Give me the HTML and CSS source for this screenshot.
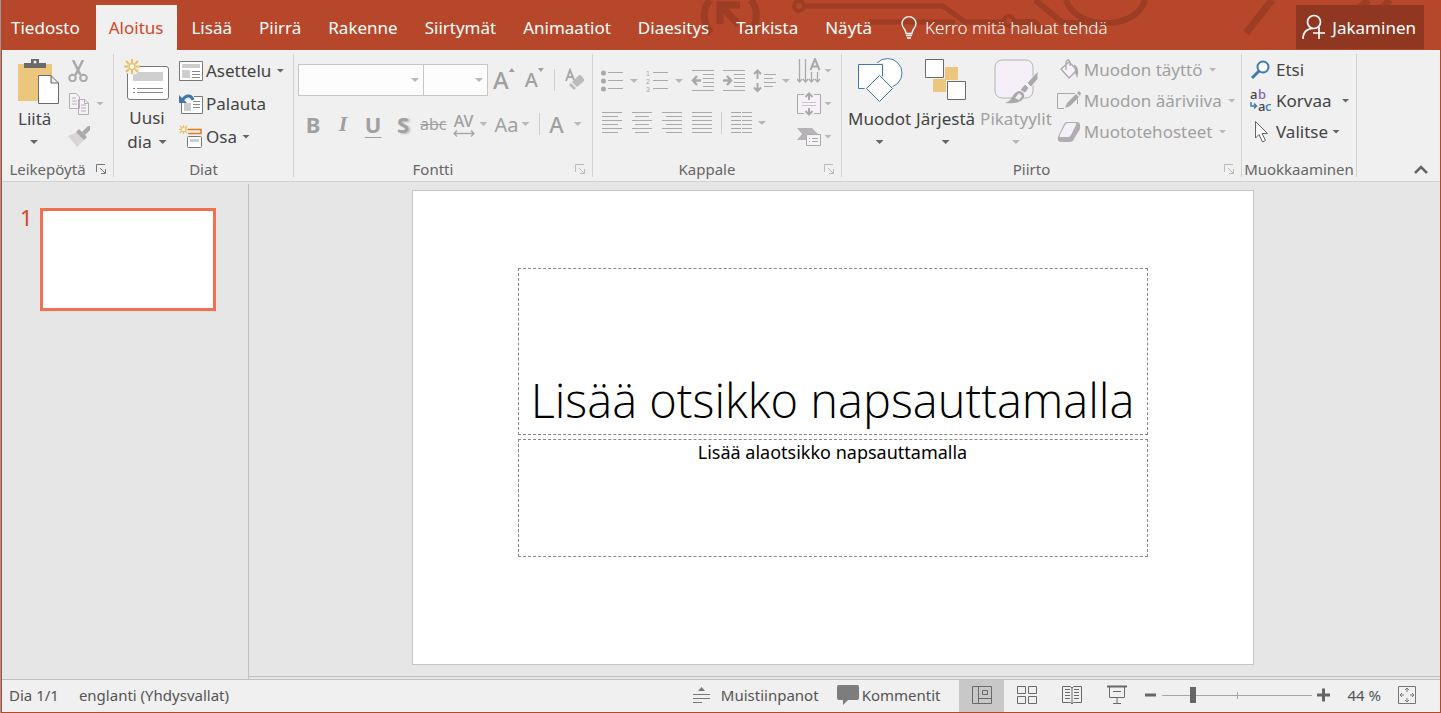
FILE: index.html
```
<!DOCTYPE html>
<html lang="fi">
<head>
<meta charset="utf-8">
<title>Esitys</title>
<link rel="stylesheet" href="styles.css">
</head>
<body>
<div class="window">
  <header class="titlebar">
    <svg class="circuit" width="751" height="50" viewBox="0 0 751 50" fill="none" stroke="#9d3d24" stroke-width="6">
      <path d="M22 33A25 25 0 0 1 21 0M62 0A25 25 0 0 1 60 33" stroke-width="7"/>
      <path d="M31 24V5H51M32 6L50 25" stroke-width="7"/>
      <circle cx="110" cy="6" r="5" stroke-width="4"/>
      <path d="M116 6H254L276 22H315M180 22H266" stroke-width="5"/>
      <circle cx="320" cy="21" r="5" stroke-width="4"/>
      <path d="M325 22H345L356 31M346 0L374 23H408M377 0C386 30 446 32 456 0"/>
      <path d="M583 0L557 33M679 0L671 8M701 0L693 8" stroke-width="7"/>
    </svg>
    <nav class="tabs">
      <button class="tab tab-file">Tiedosto</button>
      <button class="tab tab-active">Aloitus</button>
      <button class="tab">Lisää</button>
      <button class="tab">Piirrä</button>
      <button class="tab">Rakenne</button>
      <button class="tab">Siirtymät</button>
      <button class="tab">Animaatiot</button>
      <button class="tab">Diaesitys</button>
      <button class="tab">Tarkista</button>
      <button class="tab">Näytä</button>
    </nav>
    <button class="tell-me">
      <svg width="16" height="24" viewBox="0 0 16 24" fill="none" stroke="#fff" stroke-width="1.3"><path d="M5 17.500C5 13 1 12 1 7.500A7 6.800 0 0 1 15 7.500C15 12 11 13 11 17.500ZM5 19.500H11M6 22H10"/></svg>
      <span>Kerro mitä haluat tehdä</span>
    </button>
    <button class="share">
      <svg width="24" height="26" viewBox="0 0 24 26" fill="none" stroke="#fff" stroke-width="1.700"><circle cx="12" cy="8" r="6.500"/><path d="M1 25C1 17 6 14.500 11 14.500M11 19H23M17 13V25"/></svg>
      <span>Jakaminen</span>
    </button>
  </header>

  <section class="ribbon">
    <div class="group">
      <div class="group-body clipboard">
        <button class="big paste">
          <svg width="42" height="46" viewBox="0 0 42 46"><path d="M0 6H34V43H0Z" fill="#ecc67d"/><path d="M6 10V5H13V1H21V5H28V10Z" fill="#6a6a6a"/><circle cx="17" cy="4" r="1.500" fill="#f0f0f0"/><path d="M20.500 17.500H33L40.500 25V45.500H20.500ZM33 17.500V25H40.500" fill="#fff" stroke="#6a6a6a"/></svg>
          <span>Liitä</span><i class="caret"></i>
        </button>
        <div class="stack">
          <button class="cmd off" aria-label="Leikkaa"><svg width="22" height="22" viewBox="0 0 22 22" fill="none" stroke="#a9a9a9" stroke-width="2"><circle cx="4.500" cy="18" r="3.300"/><circle cx="15.500" cy="18" r="3.300"/><path d="M5 0L12.500 15M15 0L7.500 15" stroke-width="2.500"/></svg></button>
          <button class="cmd off" aria-label="Kopioi"><svg width="22" height="24" viewBox="0 0 22 24" fill="#f7f2f8" stroke="#b3b0b4"><path d="M1.500 1.500H8L11.500 5V16.500H1.500ZM4 6H8M4 9H9M4 12H9M10.500 7.500H17L20.500 11V22.500H10.500ZM16.500 7.500V11.500H20.500M13 13H18M13 16H18M13 19H18"/></svg><i class="caret"></i></button>
          <button class="cmd off" aria-label="Muotoilusivellin"><svg width="22" height="22" viewBox="0 0 22 22"><path d="M0 10L9 6L17 13L9 21Z" fill="#d8d4d8"/><path d="M8 6L11 3L19 11L16 14Z" fill="#a9a9a9"/><path d="M14 6L20 0H22V4L17 9Z" fill="#a9a9a9"/></svg></button>
        </div>
      </div>
      <footer class="group-label"><span>Leikepöytä</span><svg class="launcher" width="10" height="10" viewBox="0 0 10 10" fill="none" stroke="#777"><path d="M.5 8V.5H9M4 4L9 9M9.500 5V9.500H5"/></svg></footer>
    </div>

    <div class="group">
      <div class="group-body slides">
        <button class="big">
          <svg width="46" height="44" viewBox="0 0 46 44"><rect x="3.500" y="8.500" width="41" height="33" rx="2.500" fill="#fff" stroke="#777"/><path d="M9 14H39V23H9Z" fill="#cfcfcf"/><path d="M9 30.500H11M13 30.500H39M9 34.500H11M13 34.500H39" stroke="#8a8a8a"/><circle cx="8" cy="9" r="8" fill="#f0f0f0"/><path d="M8 1V5M8 12V16M0 8.500H4M12 8.500H16M2 3L5 6M11 11L14 14M14 3L11 6M5 11L2 14" stroke="#ecc067" stroke-width="2"/><circle cx="8" cy="8.500" r="3" fill="#fff" stroke="#ecc067" stroke-width="1.500"/></svg>
          <span>Uusi</span><span class="with-caret">dia<i class="caret"></i></span>
        </button>
        <div class="stack">
          <button class="cmd"><svg width="24" height="20" viewBox="0 0 24 20"><path d="M.5.500H23.500V19.500H.5Z" fill="#fff" stroke="#777"/><path d="M3 3H21V7H3ZM3 9H11V17H3Z" fill="#cdcdcd"/><path d="M13 10.500H21M13 13.500H21M13 16.500H21" stroke="#8a8a8a"/></svg><span>Asettelu</span><i class="caret"></i></button>
          <button class="cmd"><svg width="24" height="20" viewBox="0 0 24 20"><path d="M2.500 2.500H23.500V19.500H2.500Z" fill="#fff" stroke="#777"/><path d="M5 9H12V17H5Z" fill="#cdcdcd"/><path d="M14 7.500H21M14 10.500H21M14 13.500H21" stroke="#8a8a8a"/><path d="M0 0H15V6H0Z" fill="#f0f0f0"/><path d="M14 6C12 0 6 1 3 7" fill="none" stroke="#4177b0" stroke-width="3"/><path d="M0 1V9H8Z" fill="#4177b0"/></svg><span>Palauta</span></button>
          <button class="cmd"><svg width="24" height="24" viewBox="0 0 24 24"><path d="M9 4.500H22V8.500H9" fill="none" stroke="#e17a20" stroke-width="1.500"/><rect x="8.500" y="11.500" width="14" height="11" rx="1" fill="#fff" stroke="#777"/><path d="M11 14H20V17H11Z" fill="#cdcdcd"/><path d="M4.500 0V9M0 4.500H9M1 1L8 8M8 1L1 8" stroke="#ecc067" stroke-width="1.300"/><circle cx="4.500" cy="4.500" r="1.500" fill="#fff"/></svg><span>Osa</span><i class="caret"></i></button>
        </div>
      </div>
      <footer class="group-label"><span>Diat</span></footer>
    </div>

    <div class="group">
      <div class="group-body fonts off">
        <div class="row">
          <select class="combo combo-font" aria-label="Fontti"><option></option></select>
          <select class="combo combo-size" aria-label="Fonttikoko"><option></option></select>
          <button class="cmd glyph grow">A<i class="tri-up"></i></button>
          <button class="cmd glyph shrink">A<i class="caret"></i></button>
          <i class="sep"></i>
          <button class="cmd" aria-label="Poista muotoilut"><svg width="22" height="24" viewBox="0 0 22 24"><path d="M1 13L5 2L9 12M2.500 9H8" fill="none" stroke="#a9a9a9" stroke-width="2"/><path d="M7 14L14 7Q15 6.500 16 7.500L19 11Q19.500 12 19 13L12 19Z" fill="#bdbabd"/><path d="M6 15L11 20L9 22L4 17Z" fill="#bdbabd"/></svg></button>
        </div>
        <div class="row row-format">
          <button class="cmd glyph bold">B</button>
          <button class="cmd glyph italic">I</button>
          <button class="cmd glyph under">U</button>
          <button class="cmd glyph shadow">S</button>
          <button class="cmd strike">abc</button>
          <button class="cmd spacing"><span class="av">AV<svg width="22" height="7" viewBox="0 0 22 7" fill="none" stroke="#a9a9a9" stroke-width="1.500"><path d="M1 3.500H21M4 .5L1 3.500L4 6.500M18 .5L21 3.500L18 6.500"/></svg></span><i class="caret"></i></button>
          <button class="cmd case">Aa<i class="caret"></i></button>
          <i class="sep"></i>
          <button class="cmd glyph color">A<i class="caret"></i></button>
        </div>
      </div>
      <footer class="group-label"><span>Fontti</span><svg class="launcher" width="10" height="10" viewBox="0 0 10 10" fill="none" stroke="#bbb"><path d="M.5 8V.5H9M4 4L9 9M9.500 5V9.500H5"/></svg></footer>
    </div>

    <div class="group">
      <div class="group-body paragraph off">
        <div class="para-rows">
          <div class="row lists">
            <button class="cmd" aria-label="Luettelomerkit"><svg width="23" height="22" viewBox="0 0 23 22"><path d="M0 3a2.500 2.500 0 1 0 5 0a2.500 2.500 0 1 0-5 0M0 11a2.500 2.500 0 1 0 5 0a2.500 2.500 0 1 0-5 0M0 19a2.500 2.500 0 1 0 5 0a2.500 2.500 0 1 0-5 0" fill="#a9a9a9"/><path d="M7 2.500H22M7 10.500H22M7 18.500H22" stroke="#a9a9a9"/></svg><i class="caret"></i></button>
            <button class="cmd" aria-label="Numerointi"><svg class="numbers" width="23" height="24" viewBox="0 0 23 24"><text x="0" y="7">1</text><text x="0" y="15">2</text><text x="0" y="23">3</text><path d="M7 3.500H22M7 11.500H22M7 19.500H22" stroke="#a9a9a9"/></svg><i class="caret"></i></button>
            <button class="cmd" aria-label="Pienennä luettelotasoa"><svg width="23" height="22" viewBox="0 0 23 22" fill="none" stroke="#a9a9a9"><path d="M1 .5H23M12 4.500H23M12 8.500H23M12 12.500H23M12 16.500H23M1 20.500H23"/><path d="M10 10.500H2M6 6L2 10.500L6 15" stroke-width="2.500"/></svg></button>
            <button class="cmd" aria-label="Suurenna luettelotasoa"><svg width="23" height="22" viewBox="0 0 23 22" fill="none" stroke="#a9a9a9"><path d="M1 .5H23M12 4.500H23M12 8.500H23M12 12.500H23M12 16.500H23M1 20.500H23"/><path d="M1 10.500H9M5 6L9 10.500L5 15" stroke-width="2.500"/></svg></button>
            <button class="cmd" aria-label="Riviväli"><svg width="23" height="24" viewBox="0 0 23 24" fill="none" stroke="#a9a9a9"><path d="M11 5.500H23M11 9.500H20M11 13.500H23M11 17.500H20"/><path d="M4.500 2V10M1 5L4.500 1.500L8 5M4.500 14V22M1 18.500L4.500 22L8 18.500" stroke-width="2"/></svg><i class="caret"></i></button>
          </div>
          <div class="row aligns">
            <button class="cmd" aria-label="Tasaa vasemmalle"><svg width="20" height="22" viewBox="0 0 20 22" stroke="#a9a9a9"><path d="M0 .5H20M0 4.500H16M0 8.500H20M0 12.500H16M0 16.500H20M0 20.500H16"/></svg></button>
            <button class="cmd" aria-label="Keskitä"><svg width="20" height="22" viewBox="0 0 20 22" stroke="#a9a9a9"><path d="M0 .5H20M3 4.500H17M0 8.500H20M3 12.500H17M0 16.500H20M3 20.500H17"/></svg></button>
            <button class="cmd" aria-label="Tasaa oikealle"><svg width="20" height="22" viewBox="0 0 20 22" stroke="#a9a9a9"><path d="M0 .5H20M4 4.500H20M0 8.500H20M4 12.500H20M0 16.500H20M4 20.500H20"/></svg></button>
            <button class="cmd" aria-label="Tasaa molemmat reunat"><svg width="20" height="22" viewBox="0 0 20 22" stroke="#a9a9a9"><path d="M0 .5H20M0 4.500H20M0 8.500H20M0 12.500H20M0 16.500H20M0 20.500H20"/></svg></button>
            <i class="sep"></i>
            <button class="cmd" aria-label="Palstat"><svg width="21" height="22" viewBox="0 0 21 22" stroke="#a9a9a9"><path d="M0 .5H10M11 .5H21M0 4.500H10M11 4.500H21M0 8.500H10M11 8.500H21M0 12.500H10M11 12.500H21M0 16.500H10M11 16.500H21M0 20.500H10M11 20.500H21"/></svg><i class="caret"></i></button>
          </div>
        </div>
        <div class="stack">
          <button class="cmd" aria-label="Tekstin suunta"><svg width="24" height="26" viewBox="0 0 24 26" fill="none" stroke="#a9a9a9"><path d="M2.500 1V24M8.500 1V24M14.500 14V24M20.500 14V24M0 21L2.500 24L5 21M6 21L8.500 24L11 21M12 21L14.500 24L17 21M18 21L20.500 24L23 21" stroke-width="1.300"/><path d="M13.500 12L18 1L22.500 12M15 8.500H21" stroke-width="2"/></svg><i class="caret"></i></button>
          <button class="cmd" aria-label="Tasaa teksti"><svg width="24" height="24" viewBox="0 0 24 24" fill="none" stroke="#a9a9a9"><path d="M.5 2.500H23.500V21.500H.5Z" fill="#f7f2f8"/><path d="M5 10.500H19M5 13.500H19" stroke="#c9c5c9"/><path d="M7 2.500H17M7 21.500H17" stroke="#f0f0f0" stroke-width="2"/><path d="M12 1V8M8.500 5L12 1.500L15.500 5M12 16V23M8.500 19L12 22.500L15.500 19" stroke-width="2"/></svg><i class="caret"></i></button>
          <button class="cmd" aria-label="Muunna SmartArtiksi"><svg width="24" height="20" viewBox="0 0 24 20"><path d="M0 1H15L21 7H9V13H0L5 7Z" fill="#b5b3b5"/><path d="M9.500 7.500H23.500V18.500H9.500Z" fill="#f7f2f8" stroke="#a9a9a9"/><path d="M12 11.500H13M15 11.500H21M12 14.500H13M15 14.500H21" stroke="#a9a9a9"/></svg><i class="caret"></i></button>
        </div>
      </div>
      <footer class="group-label"><span>Kappale</span><svg class="launcher" width="10" height="10" viewBox="0 0 10 10" fill="none" stroke="#bbb"><path d="M.5 8V.5H9M4 4L9 9M9.500 5V9.500H5"/></svg></footer>
    </div>

    <div class="group">
      <div class="group-body drawing">
        <button class="big">
          <svg width="46" height="46" viewBox="0 0 46 46" fill="#fff" stroke="#4079b5"><circle cx="30.500" cy="15" r="14.500"/><path d="M1.500 6.500H25.500V30.500H1.500Z" stroke="#f0f0f0" stroke-width="3"/><path d="M1.500 6.500H25.500V30.500H1.500Z"/><path d="M22.500 17.500L35.500 30.500L22.500 43.500L9.500 30.500Z" stroke="#f0f0f0" stroke-width="3"/><path d="M22.500 17.500L35.500 30.500L22.500 43.500L9.500 30.500Z"/></svg>
          <span>Muodot</span><i class="caret"></i>
        </button>
        <button class="big">
          <svg width="42" height="46" viewBox="0 0 42 46"><path d="M20 9H33V22H20ZM8 21H21V34H8Z" fill="#ecc67d"/><path d="M.5 1.500H18.500V19.500H.5ZM22.500 23.500H40.500V41.500H22.500Z" fill="#fff" stroke="#6a6a6a"/></svg>
          <span>Järjestä</span><i class="caret"></i>
        </button>
        <button class="big off">
          <svg width="46" height="46" viewBox="0 0 46 46"><rect x="2" y="2" width="38" height="38" rx="7" fill="#f5f0f7" stroke="#b5b3b5"/><path d="M45 13V21L38 29L34 25ZM32 26L36 30L32 35L27 32Z" fill="#a9a9a9" stroke="#f0f0f0"/><path d="M26 33Q32 34 31 39C29 45 20 46 12 45C20 43 19 34 26 33Z" fill="#a9a9a9"/><path d="M26 35L29 38L26 42L22 40Z" fill="#f0f0f0"/></svg>
          <span>Pikatyylit</span><i class="caret"></i>
        </button>
        <div class="stack off">
          <button class="cmd"><svg width="24" height="22" viewBox="0 0 24 22" fill="#f7f2f8" stroke="#a9a9a9" stroke-width="1.300"><path d="M4 10L12 3L20 11L12 19ZM9 11V3Q11-1 13 3V7"/><path d="M17 6Q22 9 20 17L18 12" fill="#a9a9a9"/></svg><span>Muodon täyttö</span><i class="caret"></i></button>
          <button class="cmd"><svg width="24" height="22" viewBox="0 0 24 22"><path d="M18 3.500H.5V18.500H7M20.500 9V14" fill="none" stroke="#a9a9a9"/><path d="M8 18L10 13L19 4L22 7L13 16ZM20 3L22 1L24 3L23 6Z" fill="#a9a9a9"/></svg><span>Muodon ääriviiva</span><i class="caret"></i></button>
          <button class="cmd"><svg width="24" height="22" viewBox="0 0 24 22"><path d="M7 3Q8 1 10 1H20Q23 1 23 4V8L17 18Q16 21 13 21H3Q0 20 1 16Z" fill="#b1aeb1"/><path d="M8 4Q9 2 11 2H18Q20 2 19 4L14 14Q13 16 11 16H4Q2 16 3 14Z" fill="#f5f0f7"/></svg><span>Muototehosteet</span><i class="caret"></i></button>
        </div>
      </div>
      <footer class="group-label"><span>Piirto</span><svg class="launcher" width="10" height="10" viewBox="0 0 10 10" fill="none" stroke="#bbb"><path d="M.5 8V.5H9M4 4L9 9M9.500 5V9.500H5"/></svg></footer>
    </div>

    <div class="group">
      <div class="group-body editing">
        <div class="stack">
          <button class="cmd"><svg width="22" height="20" viewBox="0 0 22 20" fill="none" stroke="#4079b5"><circle cx="13" cy="7" r="5.500" fill="#fff" stroke-width="2"/><path d="M9 11L2 18" stroke-width="3"/></svg><span>Etsi</span></button>
          <button class="cmd korvaa"><svg class="letters" width="22" height="24" viewBox="0 0 22 24"><text x="0" y="10">a</text><text x="8" y="10" fill="#8c5fb5">b</text><text x="8" y="22">a</text><text x="15" y="22" fill="#4079b5">c</text><path d="M1 13V17H6M4 14.500L6.500 17L4 19.500" fill="none" stroke="#4079b5" stroke-width="1.500"/></svg><span>Korvaa</span><i class="caret"></i></button>
          <button class="cmd"><svg width="22" height="24" viewBox="0 0 22 24"><path d="M5.500 1.500V18L9 14.500L12.500 22L15.500 20.500L12 13.500H17.500Z" fill="#fff" stroke="#666"/></svg><span>Valitse</span><i class="caret"></i></button>
        </div>
      </div>
      <footer class="group-label group-label-tight"><span>Muokkaaminen</span></footer>
    </div>

    <button class="collapse" aria-label="Tiivistä valintanauha"><svg width="14" height="10" viewBox="0 0 14 10" fill="none" stroke="#666" stroke-width="2.500"><path d="M1 8L7 2L13 8"/></svg></button>
  </section>

  <main class="workspace">
    <aside class="thumbs">
      <span class="thumb-no">1</span>
      <button class="thumb" aria-label="Dia 1"></button>
    </aside>
    <section class="stage">
      <article class="slide">
        <h1 class="holder holder-title">Lisää otsikko napsauttamalla</h1>
        <p class="holder holder-sub">Lisää alaotsikko napsauttamalla</p>
      </article>
    </section>
  </main>

  <footer class="status">
    <span>Dia 1/1</span>
    <span>englanti (Yhdysvallat)</span>
    <button class="status-btn notes"><svg width="18" height="18" viewBox="0 0 18 18" stroke="#777"><path d="M0 8.500H17M0 12.500H17M0 16.500H9"/><path d="M5 5H12L8.500 1Z" fill="#777" stroke="none"/></svg><span>Muistiinpanot</span></button>
    <button class="status-btn comments"><svg width="22" height="20" viewBox="0 0 22 20"><path d="M2 0H20Q22 0 22 2V13Q22 15 20 15H11L6 20V15H2Q0 15 0 13V2Q0 0 2 0Z" fill="#7d7d7d"/></svg><span>Kommentit</span></button>
    <div class="views">
      <button class="view view-on" aria-label="Normaali"><svg width="20" height="18" viewBox="0 0 20 18" fill="none" stroke="#6a6a6a"><path d="M.5.500H19.500V17.500H.5ZM6.500.5V17.500M6.500 12.500H19.500M10.500 4.500H15.500V8.500H10.500Z"/></svg></button>
      <button class="view" aria-label="Dialajittelu"><svg width="20" height="18" viewBox="0 0 20 18" fill="none" stroke="#6a6a6a"><path d="M.5.500H8.500V7.500H.5ZM11.500.5H19.500V7.500H11.500ZM.5 10.500H8.500V17.500H.5ZM11.500 10.500H19.500V17.500H11.500Z"/></svg></button>
      <button class="view" aria-label="Lukunäkymä"><svg width="20" height="20" viewBox="0 0 20 20" fill="none" stroke="#6a6a6a"><path d="M.5 1.500H8.500L10 3L11.500 1.500H19.500V17.500H11.500L10 19L8.500 17.500H.5ZM10 3V19M3 4.500H8M3 7.500H8M3 10.500H8M3 13.500H8M12 4.500H17M12 7.500H17M12 10.500H17M12 13.500H17"/></svg></button>
      <button class="view" aria-label="Diaesitys"><svg width="20" height="20" viewBox="0 0 20 20" fill="none" stroke="#6a6a6a"><path d="M0 1.500H20" stroke-width="2"/><path d="M2.500 2V12.500H17.500V2M6 6.500H14M10 12V18M6 18.500H14"/></svg></button>
    </div>
    <div class="zoom">
      <button class="zoom-btn" aria-label="Loitonna"><svg width="14" height="14" viewBox="0 0 14 14"><path d="M1 7H12" stroke="#666" stroke-width="3"/></svg></button>
      <input class="zoom-range" type="range" min="0" max="100" value="19" aria-label="Zoomaus">
      <button class="zoom-btn" aria-label="Lähennä"><svg width="14" height="14" viewBox="0 0 14 14"><path d="M1 7H14M7.500.500V13.500" stroke="#666" stroke-width="3"/></svg></button>
      <span class="zoom-value">44 %</span>
      <button class="zoom-btn" aria-label="Sovita ikkunaan"><svg width="18" height="18" viewBox="0 0 18 18" fill="none" stroke="#777"><path d="M.5.500H17.500V17.500H.5Z"/><path d="M9 2V6M7 4L9 2L11 4M9 12V16M7 14L9 16L11 14M2 9H6M4 7L2 9L4 11M12 9H16M14 7L16 9L14 11"/></svg></button>
    </div>
  </footer>
</div>
</body>
</html>
```

FILE: styles.css
```
* { box-sizing: border-box; }

body {
  margin: 0;
  border-left: 1px solid #999;
  color: #444;
  font-family: "Noto Sans", "Open Sans", sans-serif;
  font-size: 17px;
}

button {
  margin: 0;
  padding: 0;
  border: 0;
  background: none;
  color: inherit;
  font: inherit;
  white-space: nowrap;
}

svg { flex: none; }

.window {
  display: flex;
  flex-direction: column;
  height: 100vh;
  border: 1px solid #b7472a;
  border-top: 0;
}

/* Title bar and tabs */
.titlebar {
  position: relative;
  display: flex;
  flex: none;
  height: 50px;
  padding-top: 5px;
  background: #b7472a;
  color: #fff;
}
.circuit { position: absolute; top: 0; right: 0; }
.tabs { position: relative; display: flex; }
.tab { padding: 0 13px 0 14px; }
.tab-file { padding: 0 16px 0 9px; }
.tab-active { padding: 0 14px 0 13px; background: #f0f0f0; color: #d24726; }
.tell-me {
  position: relative;
  display: flex;
  align-items: center;
  gap: 8px;
  margin-left: 16px;
  font-weight: 300;
}
.share {
  position: relative;
  display: flex;
  align-items: center;
  gap: 6px;
  height: 44px;
  margin: 0 16px 0 auto;
  padding: 0 8px 0 6px;
  background: #8f3721;
}

/* Ribbon */
.ribbon {
  display: grid;
  grid-template-columns: 112px 180px 299px 249px 400px 115px 1fr;
  flex: none;
  height: 132px;
  padding: 4px 0;
  border-bottom: 1px solid #d2d2d2;
  background: #f0f0f0;
}
.group {
  display: flex;
  flex-direction: column;
  border-right: 1px solid #d2d2d2;
}
.group-body { display: flex; flex: 1; }
.group-label {
  display: flex;
  align-items: center;
  height: 16px;
  padding: 0 7px;
  color: #666;
  font-size: 15px;
  line-height: 16px;
}
.group-label span { flex: 1; text-align: center; }
.group-label span:not(:last-child) { padding-right: 10px; }
.group-label-tight { padding: 0 2px; }
.off { color: #a0a0a0; }
.caret {
  flex: none;
  width: 8px;
  height: 4px;
  background: #666;
  clip-path: polygon(0 0, 100% 0, 50% 100%);
}
.off .caret { background: #b8b8b8; }
.tri-up {
  width: 6px;
  height: 4px;
  background: #a0a0a0;
  clip-path: polygon(50% 0, 100% 100%, 0 100%);
}
.big {
  display: flex;
  flex-direction: column;
  align-items: center;
  height: 96px;
  line-height: 24px;
}
.big svg { margin: 4px 0 3px; }
.big > .caret { margin-top: 9px; }
.with-caret { display: flex; align-items: center; gap: 5px; }
.stack { display: flex; flex-direction: column; }
.cmd { display: flex; align-items: center; gap: 3px; }
.row { display: flex; align-items: center; }
.sep { flex: none; width: 1px; height: 22px; background: #cfcfcf; }

.clipboard { gap: 8px; padding-left: 16px; }
.clipboard .stack .cmd { height: 33px; gap: 6px; }
.paste { align-items: flex-start; }
.paste > .caret { margin-left: 12px; }

.slides { gap: 9px; padding-left: 10px; }
.slides .big svg { margin: 4px 0; }
.slides .cmd { height: 33px; }
.slides .caret { margin-left: 2px; }

.fonts { flex-direction: column; padding: 10px 4px 0; gap: 12px; }
.combo {
  height: 32px;
  border: 1px solid #c6c6c6;
  border-radius: 0;
  background: #fdfdfd url("data:image/svg+xml,%3Csvg xmlns='http://www.w3.org/2000/svg' width='8' height='4'%3E%3Cpath d='M0 0H8L4 4Z' fill='%23b8b8b8'/%3E%3C/svg%3E") no-repeat right 4px center;
  appearance: none;
}
.combo-font { width: 126px; }
.combo-size { width: 65px; margin-left: -1px; }
.glyph { font-size: 22px; font-weight: 700; line-height: 28px; }
.grow, .shrink { align-items: flex-start; gap: 0; font-size: 24px; font-weight: 500; }
.grow { margin-left: 5px; }
.shrink { margin-left: 10px; font-size: 20px; }
.shrink .caret, .tri-up { margin-top: 2px; }
.shrink .caret { width: 6px; background: #a0a0a0; }
.fonts .sep { margin: 0 10px; }
.row-format { height: 32px; }
.row-format .glyph { width: 30px; justify-content: center; }
.italic { font-family: "Liberation Serif", serif; font-style: italic; }
.under { text-decoration: underline; text-underline-offset: 4px; text-decoration-thickness: 1px; }
.shadow { text-shadow: 2px 1px 2px #bbb; }
.strike { margin: 0 6px 0 2px; text-decoration: line-through; font-size: 16px; }
.spacing { gap: 5px; }
.av { display: flex; flex-direction: column; align-items: center; font-size: 16px; line-height: 18px; font-weight: 500; }
.case { margin-left: 7px; font-size: 20px; }
.row-format .sep { margin: 0 9px; }
.row-format .color { width: 34px; gap: 10px; font-weight: 500; }

.paragraph { padding-left: 8px; }
.para-rows { display: flex; flex-direction: column; width: 196px; padding-top: 11px; gap: 12px; }
.lists { height: 32px; }
.lists .cmd { gap: 6px; margin-right: 8px; }
.numbers { fill: #a9a9a9; font-family: "Liberation Sans", sans-serif; font-size: 7px; }
.aligns { height: 28px; gap: 10px; padding-left: 1px; }
.aligns .sep { margin: 0 -1px; }
.aligns .cmd { gap: 6px; }
.paragraph .stack .cmd { height: 33px; gap: 3px; }

.drawing { padding-left: 6px; }
.drawing .big + .big { margin-left: 5px; }
.drawing .stack { margin-left: 5px; }
.drawing .cmd, .editing .cmd { height: 31px; }
.drawing .stack .caret { margin-left: 3px; }

.editing { padding-left: 8px; }
.editing .cmd { gap: 4px; }
.korvaa .caret { margin-left: 6px; }
.letters { overflow: visible; fill: #444; font-family: "Noto Sans", sans-serif; font-size: 13px; font-weight: 500; }
.collapse { align-self: end; justify-self: end; width: 38px; height: 20px; }

/* Workspace */
.workspace {
  display: flex;
  flex: 1;
  min-height: 0;
  padding-top: 2px;
  background: #e6e6e6;
}
.thumbs {
  display: flex;
  align-items: flex-start;
  gap: 8px;
  width: 247px;
  padding: 24px 0 0 18px;
  border-right: 1px solid #c0c0c0;
}
.thumb-no { width: 12px; color: #d24726; font-size: 22px; line-height: 18px; }
.thumb {
  width: 176px;
  aspect-ratio: 176 / 103;
  border: 3px solid #f07050;
  background: #fff;
}
.stage {
  display: flex;
  flex: 1;
  justify-content: center;
  margin-bottom: 2px;
  padding: 6px 24px 11px 0;
  border-bottom: 1px solid #c0c0c0;
}
.slide {
  display: grid;
  grid-template-columns: 1fr 6fr 1fr;
  grid-template-rows: 77fr 167fr 4fr 118fr 107fr;
  height: 100%;
  aspect-ratio: 842 / 475;
  border: 1px solid #c6c6c6;
  background: #fff;
  color: #000;
}
.holder {
  grid-column: 2;
  margin: 0;
  border: 1px dashed #888;
  text-align: center;
  white-space: nowrap;
}
.holder-title {
  display: flex;
  grid-row: 2;
  align-items: flex-end;
  justify-content: center;
  font-family: "Open Sans", "Noto Sans", sans-serif;
  font-size: 47px;
  font-weight: 300;
  line-height: 68px;
}
.holder-sub { grid-row: 4; font-size: 18px; line-height: 24px; }

/* Status bar */
.status {
  display: flex;
  flex: none;
  align-items: center;
  height: 33px;
  padding: 0 24px 0 7px;
  border-top: 1px solid #c0c0c0;
  background: #f0f0f0;
  color: #555;
  font-size: 15px;
  line-height: 18px;
}
.status > span, .status-btn, .zoom { padding-bottom: 2px; }
.status > span { margin-right: 20px; }
.status-btn { display: flex; align-items: center; }
.notes { gap: 10px; margin-left: auto; margin-right: 18px; }
.comments { gap: 3px; margin-right: 19px; }
.views { display: flex; align-self: stretch; }
.view { display: flex; width: 45px; align-items: center; justify-content: center; padding-bottom: 2px; }
.view-on { background: #c8c8c8; }
.zoom { display: flex; align-items: center; margin-left: 5px; }
.zoom-btn { display: flex; }
.zoom-range {
  width: 150px;
  height: 20px;
  margin: 0 4px;
  background:
    linear-gradient(#a6a6a6, #a6a6a6) center / 1px 7px no-repeat,
    linear-gradient(#a6a6a6, #a6a6a6) center / 100% 1px no-repeat;
  appearance: none;
}
.zoom-range::-webkit-slider-thumb {
  width: 6px;
  height: 16px;
  background: #666;
  appearance: none;
}
.zoom-value { margin: 0 17px; }
```
